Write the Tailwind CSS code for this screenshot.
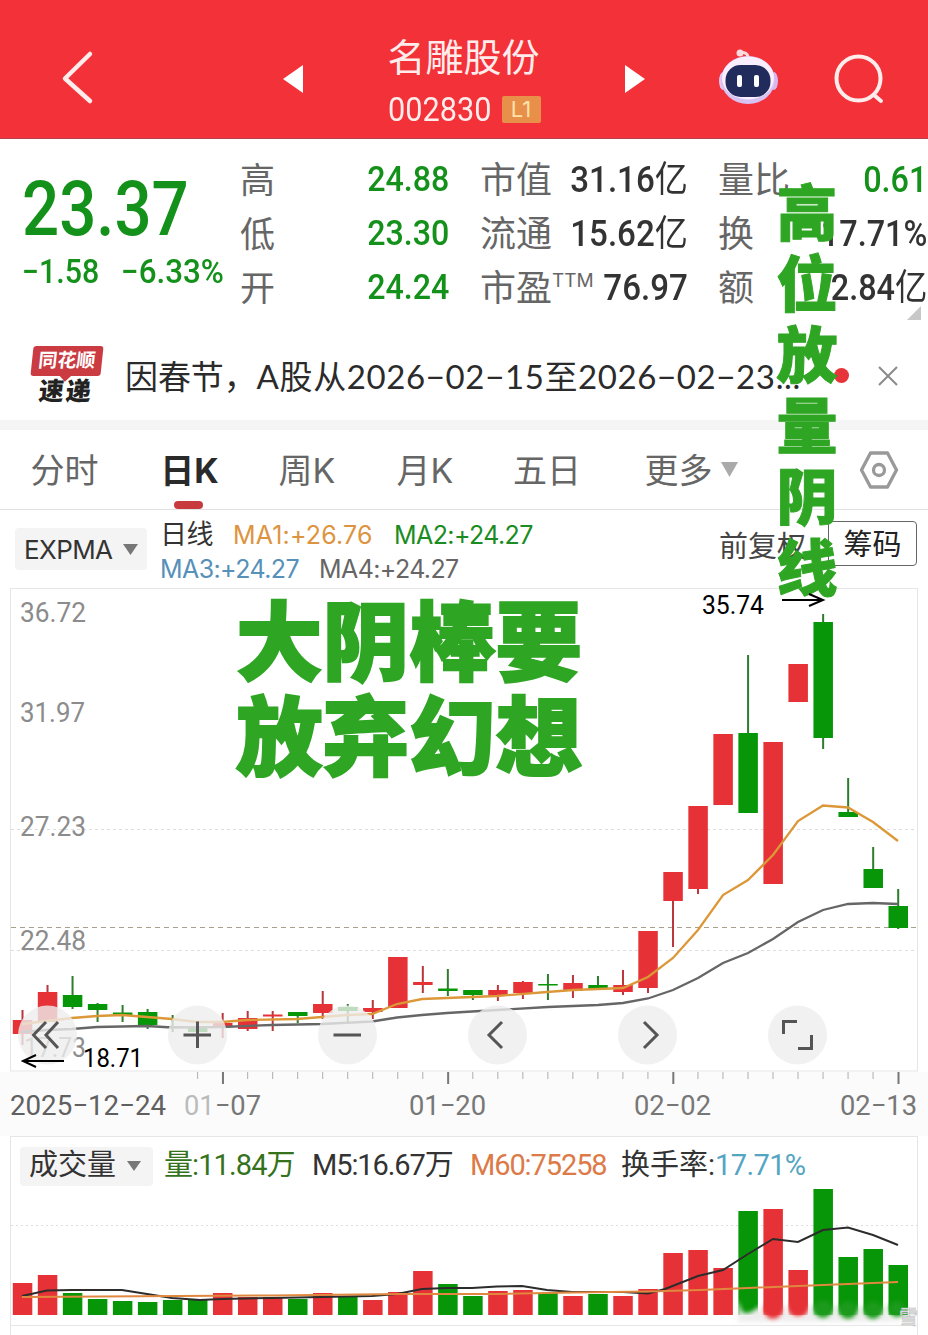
<!DOCTYPE html>
<html lang="zh-CN">
<head>
  <meta charset="UTF-8" />
  <meta name="viewport" content="width=device-width, initial-scale=1.0" />
  <title>名雕股份 002830</title>
  <script src="https://cdn.jsdelivr.net/npm/@tailwindcss/browser@4"></script>
</head>
<body class="relative w-[928px] h-[1335px] overflow-hidden bg-white text-[#333] font-['Inter','Noto_Sans_CJK_SC',sans-serif]">
  <!-- 顶部标题栏 -->
  <header class="h-[139px] bg-[#f23139] border-b border-[#b5424c] text-[#ffeceb] flex items-center">
    <div class="w-[232px] pl-[60px] pt-4">
      <svg class="w-9 h-14" viewBox="0 0 36 56" fill="none" stroke="currentColor" stroke-width="4.5" stroke-linecap="round" stroke-linejoin="round"><path d="M30 5L5 29.5L30 52" /></svg>
    </div>
    <div class="w-[464px] flex items-center justify-between px-[51px] pt-5">
      <svg class="w-5 h-7" viewBox="0 0 20 28" fill="#fff"><path d="M20 0V28L0 14z" /></svg>
      <div class="w-[153px] pt-2.5">
        <h1 class="text-[38px] leading-[50px] whitespace-nowrap">名雕股份</h1>
        <div class="flex items-center justify-between h-[54px]">
          <span class="w-[104px] text-[33px] leading-none font-['Roboto']"><span class="inline-block origin-left scale-x-[.93]">002830</span></span>
          <span class="w-[39px] h-[27px] rounded-[2px] bg-[#e8904a] text-[#ffe3a8] text-[22px] leading-[27px] text-center">L1</span>
        </div>
      </div>
      <svg class="w-5 h-7" viewBox="0 0 20 28" fill="#fff"><path d="M0 0V28L20 14z" /></svg>
    </div>
    <div class="flex items-center gap-14 pl-[22px] pt-5">
      <!-- 机器人助手 -->
      <svg class="w-[60px] h-[58px] -mt-1" viewBox="0 0 60 58">
        <path d="M30 13C31 7 29 4 21 4" fill="none" stroke="#ffd9de" stroke-width="3" />
        <circle cx="22" cy="5" r="3.5" fill="#ffd9de" />
        <ellipse cx="5" cy="33" rx="4" ry="9" fill="#e6c4f2" /><ellipse cx="56" cy="33" rx="4" ry="9" fill="#d9b6ee" />
        <ellipse cx="30" cy="32" rx="27" ry="24" fill="#d8c2f2" />
        <ellipse cx="30" cy="30" rx="26" ry="21.5" fill="#fbefff" />
        <rect x="7.500" y="17" width="45" height="32" rx="15" fill="#222c5c" />
        <rect x="19" y="27" width="5" height="12" rx="2" fill="#fff" /><rect x="36" y="27" width="5" height="12" rx="2" fill="#fff" />
      </svg>
      <svg class="w-[50px] h-[50px]" viewBox="0 0 50 50" fill="none" stroke="currentColor" stroke-width="4" stroke-linecap="round"><circle cx="24.500" cy="24.500" r="22" /><path d="M40 41L47 47" /></svg>
    </div>
  </header>

  <!-- 行情数据 -->
  <section class="h-[191px] flex pt-[14px] pl-[22px] relative">
    <div class="w-[218px] text-[#14911a] font-['Roboto'] font-medium">
      <div class="h-[90px] text-[76px] leading-[112px] whitespace-nowrap"><span class="inline-block origin-left scale-x-[.86]">23.37</span></div>
      <div class="flex justify-between w-[202px] text-[33px] leading-[58px]">
        <span class="w-[78px] whitespace-nowrap"><span class="inline-block origin-left scale-x-[.92]">−1.58</span></span>
        <span class="w-[103px] whitespace-nowrap"><span class="inline-block origin-left scale-x-[.95]">−6.33%</span></span>
      </div>
    </div>
    <dl class="w-[209px] mr-[31px] text-[35px] leading-[54px] [&>div]:flex [&>div]:justify-between [&_dt]:text-[#666] [&_dd]:text-[#14911a] [&_dd]:font-['Roboto'] [&_dd]:font-medium [&_dd]:origin-right [&_dd]:scale-x-[.92]">
      <div><dt>高</dt><dd>24.88</dd></div>
      <div><dt>低</dt><dd>23.30</dd></div>
      <div><dt>开</dt><dd>24.24</dd></div>
    </dl>
    <dl class="w-[208px] mr-[30px] text-[36px] leading-[54px] whitespace-nowrap [&>div]:flex [&>div]:justify-between [&_dt]:text-[#666] [&_dd]:font-['Roboto','Noto_Sans_CJK_SC'] [&_dd]:font-medium [&_dd]:origin-right [&_dd]:scale-x-[.92]">
      <div><dt>市值</dt><dd>31.16<span class="font-normal">亿</span></dd></div>
      <div><dt>流通</dt><dd>15.62<span class="font-normal">亿</span></dd></div>
      <div><dt class="flex">市盈<span class="text-[19px] leading-[40px]">TTM</span></dt><dd>76.97</dd></div>
    </dl>
    <dl class="w-[209px] text-[36px] leading-[54px] whitespace-nowrap [&>div]:flex [&>div]:justify-between [&_dt]:text-[#666] [&_dd]:font-['Roboto','Noto_Sans_CJK_SC'] [&_dd]:font-medium [&_dd]:origin-right [&_dd]:scale-x-[.9]">
      <div><dt>量比</dt><dd class="text-[#14911a]">0.61</dd></div>
      <div><dt>换</dt><dd>17.71%</dd></div>
      <div><dt>额</dt><dd>2.84<span class="font-normal">亿</span></dd></div>
    </dl>
    <svg class="absolute right-[7px] top-[167px] w-[14px] h-[14px]" viewBox="0 0 14 14" fill="#c8c8c8"><path d="M14 0V14H0z" /></svg>
  </section>

  <!-- 速递公告 -->
  <section class="h-[90px] flex items-center pl-[30px]">
    <div class="w-[73px] flex flex-col items-center pt-0.5">
      <div class="relative -skew-x-6 w-[70px] h-[30px] rounded-[3px] bg-[#cb3b42] text-white text-[19px] leading-[29px] font-bold text-center">同花顺<span class="absolute left-[31px] -bottom-1 w-2 h-2 rotate-45 bg-[#cb3b42]"></span></div>
      <div class="-skew-x-6 text-[25px] leading-[31px] font-black whitespace-nowrap text-[#222] tracking-[2px]">速递</div>
    </div>
    <p class="w-[676px] ml-[22px] pt-0.5 text-[33px] leading-[50px] text-[#2b2b2b] whitespace-nowrap tracking-[-0.1px]">因春节，<span class="font-['Lato','Noto_Sans_CJK_SC'] tracking-[0.62px]">A股从2026−02−15至2026−02−23...</span></p>
    <span class="w-[15px] h-[15px] ml-[33px] rounded-full bg-[#e5343a]"></span>
    <svg class="w-5 h-5 ml-[29px] mt-0.5" viewBox="0 0 20 20" stroke="#8a8a8a" stroke-width="2"><path d="M1 1L19 19M19 1L1 19" /></svg>
  </section>
  <div class="h-[10px] bg-[#f5f5f6]"></div>

  <!-- 周期切换 -->
  <nav class="h-[80px] border-b border-[#e2e2e2] grid grid-cols-[129px_121px_114px_122px_122px_142px_1fr] text-center text-[34px] leading-[82px] text-[#666]">
    <span>分时</span>
    <span class="relative font-bold text-[#2a2a2a]">日K<i class="absolute left-[45px] top-[71px] w-[29px] h-2 rounded-full bg-[#c73a3d]"></i></span>
    <span>周K</span>
    <span>月K</span>
    <span>五日</span>
    <span class="flex items-center justify-center gap-2 pl-[24px]">更多<svg class="w-[17px] h-[15px] shrink-0 -mt-1" viewBox="0 0 17 15" fill="#aaa"><path d="M0 0H17L8.500 15z" /></svg></span>
    <span class="flex items-center justify-end pr-[29px]"><svg class="w-10 h-10 -mt-0.5" viewBox="0 0 40 40" fill="none" stroke="#999" stroke-width="3.300" stroke-linejoin="round"><path d="M11.500 3H28.500L37.500 20L28.500 37H11.500L2.500 20z" /><circle cx="20" cy="20" r="5.500" /></svg></span>
  </nav>

  <!-- 指标栏 -->
  <section class="h-[78px] flex items-center pl-[15px] pr-[11px]">
    <div class="w-[132px] h-[42px] rounded bg-[#f4f4f4] flex items-center justify-between px-[9px] text-[26px] tracking-[-0.6px]">EXPMA<svg class="w-[15px] h-[11px]" viewBox="0 0 15 11" fill="#777"><path d="M0 0H15L7.500 11z" /></svg></div>
    <div class="w-[400px] ml-[13px] mt-1.5 text-[25px] leading-[34px] tracking-[-0.6px] whitespace-nowrap">
      <div class="flex"><span class="w-[73px] text-[27px]">日线</span><span class="w-[161px] text-[#dd9440] tracking-[0.15px]">MA1:+26.76</span><span class="text-[#1a8c22]">MA2:+24.27</span></div>
      <div class="flex"><span class="w-[159px] text-[#5790b8]">MA3:+24.27</span><span class="text-[#666]">MA4:+24.27</span></div>
    </div>
    <span class="ml-auto -mt-1 text-[29px] text-[#444]">前复权</span>
    <span class="ml-[22px] w-[89px] h-[45px] mt-[-12px] border border-[#666] rounded text-[29px] leading-[45px] text-center text-[#222] whitespace-nowrap">筹码</span>
  </section>

  <!-- K线图 -->
  <svg class="block w-[928px] h-[548px] font-['Roboto']" viewBox="0 588 928 548">
    <rect x="0" y="1072" width="928" height="64" fill="#fbfbfb" />
    <rect x="10.500" y="588.500" width="907" height="482.500" fill="#fff" stroke="#e6e6e6" />
    <path d="M11 829.500H917M11 950.500H917" stroke="#ddd" stroke-dasharray="3 3" />
    <path d="M11 927.500H917" stroke="#a8a08e" stroke-dasharray="5 4" />
    <g fill="#8c8c8c" font-size="27">
      <text x="20" y="622" textLength="66" lengthAdjust="spacingAndGlyphs">36.72</text>
      <text x="20" y="722" textLength="65" lengthAdjust="spacingAndGlyphs">31.97</text>
      <text x="20" y="836" textLength="66" lengthAdjust="spacingAndGlyphs">27.23</text>
      <text x="20" y="950" textLength="66" lengthAdjust="spacingAndGlyphs">22.48</text>
      <text x="24" y="1057" textLength="62" lengthAdjust="spacingAndGlyphs">17.73</text>
    </g>
    <g id="candles"></g>
    <polyline fill="none" stroke="#666" stroke-width="2.300" points="22,1032 47,1030 72,1029 97,1027 147,1026 172,1027.500 222,1027 272,1025 322,1024 372,1021.500 397,1017.500 422,1015 447,1013 497,1010 548,1007 573,1006 598,1005 623,1003 648,998.500 673,990 698,978 723,963 748,953 773,939 798,922 823,910 848,904 873,903 898,904" />
    <polyline fill="none" stroke="#dc9838" stroke-width="2.300" points="22,1024 47,1021 72,1018 97,1016 122,1015 147,1017 172,1019 197,1022 222,1022 247,1020 297,1019 322,1017 347,1015 372,1014 397,1004 422,999 447,998 497,996 547,992 573,990 598,989 623,988 648,977 673,958 698,930 723,895 748,880 773,855 798,821 823,805.500 848,807.500 873,822 898,841" />
    <!-- 悬浮操作按钮 -->
    <g fill="#ededed" fill-opacity=".8">
      <circle cx="47.500" cy="1035" r="29.500" /><circle cx="197.500" cy="1035" r="29.500" /><circle cx="347.500" cy="1035" r="29.500" />
      <circle cx="497.500" cy="1035" r="29.500" /><circle cx="647.500" cy="1035" r="29.500" /><circle cx="797.500" cy="1035" r="29.500" />
    </g>
    <g fill="none" stroke="#555" stroke-width="3">
      <path d="M46 1022L33.500 1035L46 1048M58 1022L46 1035L58 1048" />
      <path d="M183.500 1035H211M197.500 1021.500V1048" />
      <path d="M333.500 1035H361" />
      <path d="M502 1022L489 1035L502 1048M644 1022L657 1035L644 1048" />
      <path d="M783.500 1034V1021.500H797M811.500 1035V1048.500H798" />
    </g>
    <g fill="#000" font-size="26">
      <text x="702" y="614" textLength="62" lengthAdjust="spacingAndGlyphs">35.74</text>
      <text x="83" y="1067" textLength="60" lengthAdjust="spacingAndGlyphs">18.71</text>
    </g>
    <path d="M64 1061H23M36 1055L23 1061L36 1067" fill="none" stroke="#000" stroke-width="2" />
    <!-- 日期轴 -->
    <g id="ticks"></g>
    <g font-size="28" fill="#777">
      <text x="10" y="1115" fill="#606060" textLength="156" lengthAdjust="spacingAndGlyphs">2025−12−24</text>
      <text x="184" y="1115" textLength="77" lengthAdjust="spacingAndGlyphs"><tspan fill="#bbb">01</tspan>−07</text>
      <text x="409" y="1115" textLength="77" lengthAdjust="spacingAndGlyphs">01−20</text>
      <text x="634" y="1115" textLength="77" lengthAdjust="spacingAndGlyphs">02−02</text>
      <text x="840" y="1115" textLength="77" lengthAdjust="spacingAndGlyphs">02−13</text>
    </g>
  </svg>

  <!-- 成交量 -->
  <section class="relative mx-[10px] h-[190px] border border-[#e6e6e6]">
    <div class="flex items-center h-[58px] pl-[9px] text-[29px] whitespace-nowrap font-['Roboto','Noto_Sans_CJK_SC']">
      <div class="w-[133px] h-[39px] rounded bg-[#f4f4f4] flex items-center justify-between pl-[9px] pr-3">成交量<svg class="w-[14px] h-[10px]" viewBox="0 0 14 10" fill="#777"><path d="M0 0H14L7 10z" /></svg></div>
      <span class="w-[148px] ml-[11px] text-[#35721c] tracking-[-0.9px]">量:11.84万</span>
      <span class="w-[158px] tracking-[-1.100px]">M5:16.67万</span>
      <span class="w-[151px] text-[#dc7a48] tracking-[-1.100px]">M60:75258</span>
      <span>换手率:<span class="text-[#54a5c2] tracking-[-0.6px]">17.71%</span></span>
    </div>
  </section>
  <div class="mx-[10px] h-[10px] border-x border-[#e6e6e6]"></div>

  <!-- 成交量柱 -->
  <svg class="absolute left-0 top-[1180px] w-[928px] h-[155px]" viewBox="0 1180 928 155">
    <path d="M11 1225.500H917" stroke="#ddd" stroke-dasharray="2 3" />
    <g id="volumes"></g>
    <polyline fill="none" stroke="#2c2c2c" stroke-width="2" points="22,1296 47,1290.500 72,1290 122,1290 147,1294 172,1298 200,1300 222,1299 272,1298 322,1297 372,1296 397,1294 422,1289 447,1288 472,1288 497,1286.500 522,1286 547,1290 572,1292 623,1292 648,1293.500 665,1289 698,1276 723,1270 748,1254 773,1239 798,1242 823,1230 848,1227.500 873,1235 898,1245" />
    <polyline fill="none" stroke="#e0883f" stroke-width="2" points="22,1297 272,1295.500 400,1294 500,1294 573,1292.500 648,1291.500 700,1290 748,1288 823,1285 898,1282" />
    <!-- 右下角水印 -->
    <g class="blur-[2px]">
      <g fill="#e63236"><circle cx="773" cy="1310" r="9" /><circle cx="798" cy="1308" r="8" /></g>
      <g fill="#1c9a1c"><circle cx="823" cy="1309" r="9" /><circle cx="848" cy="1310" r="9" /><circle cx="873" cy="1310" r="9" /><circle cx="897" cy="1309" r="8" /></g>
      <path d="M738 1300V1322H900V1319Q885 1322 885 1302Q884 1320 873 1320Q862 1320 860 1302Q858 1320 848 1320Q837 1320 836 1302Q834 1320 823 1319Q812 1319 811 1302Q808 1318 798 1318Q788 1318 786 1302Q784 1320 773 1320Q762 1319 759 1306Q750 1316 742 1312z" fill="#eee" />
    </g>
    <text class="font-['Noto_Sans_CJK_SC']" x="899" y="1324" font-size="19" fill="#fff" stroke="#bbb" stroke-width=".7">雪</text>
  </svg>

  <!-- 标注文字 -->
  <div class="absolute left-[776px] top-[174px] w-[62px] text-[61px] leading-[71px] font-black text-[#2fa524] font-['Noto_Sans_CJK_SC'] text-center [-webkit-text-stroke:1px_#2fa524]">高位放量阴线</div>
  <div class="absolute left-[236px] top-[589px] w-[360px] text-[86.500px] leading-[95px] font-black text-[#2fa524] font-['Noto_Sans_CJK_SC'] [-webkit-text-stroke:2px_#2fa524]">大阴棒要放弃幻想</div>
  <svg class="absolute left-[780px] top-[592px] w-[46px] h-4" viewBox="0 0 46 16" fill="none" stroke="#000" stroke-width="2"><path d="M2 8H42M29 2L43 8L29 14" /></svg>

  <script>
    // [颜色, 实体上沿, 实体下沿, 影线上沿, 影线下沿, 成交量柱上沿]
    const days = [
      ['r', 1020, 1034, 1010, 1045, 1283], ['r', 992, 1022, 985, 1022, 1275], ['g', 995, 1007, 976, 1009, 1293],
      ['g', 1004, 1010, 1003, 1022, 1299], ['g', 1012.5, 1016, 1005, 1022, 1301], ['g', 1012, 1025, 1009, 1029, 1302],
      ['g', 1026, 1028, 1015, 1032, 1300], ['g', 1028, 1032, 1028, 1032, 1300], ['r', 1023, 1026, 1013, 1038, 1293],
      ['r', 1018, 1029, 1011, 1031, 1297], ['r', 1014.5, 1016.5, 1011, 1031, 1297], ['g', 1012, 1016, 1012, 1023, 1299],
      ['r', 1004, 1013, 991, 1019, 1293], ['g', 1007, 1011, 1004, 1022, 1297], ['r', 1008, 1012, 1000, 1019, 1300],
      ['r', 957, 1008, 957, 1008, 1292], ['r', 982, 985, 966, 993, 1271], ['g', 988.5, 991, 969, 996, 1284],
      ['g', 990, 995, 990, 1000, 1296], ['r', 990, 996, 985, 1001, 1291], ['r', 982, 993, 981, 999, 1290],
      ['g', 984, 985.5, 974, 1000, 1293], ['r', 983, 991, 975, 998, 1296], ['g', 985, 989, 976, 989, 1294],
      ['r', 985, 992, 970, 995, 1296], ['r', 931, 988, 931, 993, 1289], ['r', 872, 901, 872, 947, 1253],
      ['r', 806, 889, 806, 894, 1250], ['r', 734, 805, 734, 805, 1268], ['g', 733, 813, 655, 813, 1211],
      ['r', 742, 884, 742, 884, 1209], ['r', 664, 702, 664, 702, 1270], ['g', 622, 738, 614, 749, 1189],
      ['g', 812, 817, 778, 817, 1257], ['g', 869, 888, 847, 888, 1249], ['g', 906, 928, 889, 929, 1265]
    ];
    const colors = { r: '#e63236', g: '#079607' };
    let candles = '', volumes = '', ticks = '';
    days.forEach(([c, top, bottom, high, low, vol], i) => {
      const x = 22.5 + i * 25.02;
      const left = Math.max(x - 9.7, 12);
      candles += `<rect x="${x - 1}" y="${high}" width="2" height="${low - high}" fill="${c === 'r' ? '#b8363c' : '#2c7d2c'}"/>`;
      candles += `<rect x="${left}" y="${top}" width="19.5" height="${bottom - top}" fill="${colors[c]}"/>`;
      volumes += `<rect x="${left}" y="${vol}" width="19.5" height="${1315 - vol}" fill="${colors[c]}"/>`;
      // 每九个交易日一个长刻度
      if (i >= 7) {
        const major = i === 8 || i === 17 || i === 26 || i === 35;
        ticks += `<rect x="${x - 0.7}" y="1072" width="${major ? 2 : 1.2}" height="${major ? 12 : 7}" fill="${major ? '#777' : '#bbb'}"/>`;
      }
    });
    document.getElementById('candles').innerHTML = candles;
    document.getElementById('volumes').innerHTML = volumes;
    document.getElementById('ticks').innerHTML = ticks;
  </script>
</body>
</html>
